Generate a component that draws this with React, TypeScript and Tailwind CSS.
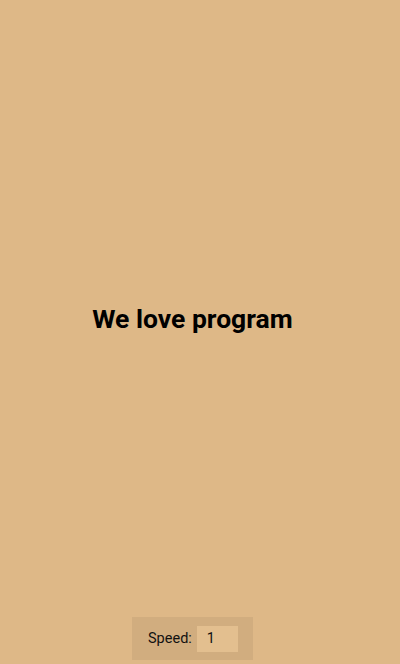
import React from "react";

export default function App() {
  return (
    <div className="w-[400px] h-[664px] bg-[#deb887]">
      <div className="w-[385px] h-[664px] flex flex-col items-center" style={{ fontFamily: "Roboto, 'Liberation Sans', sans-serif" }}>
        <div className="flex-1 flex items-center justify-center pt-[22px]">
          <h1 className="text-[26.5px] font-bold text-black leading-none">We love program</h1>
        </div>
        <div className="mb-[4px] w-[121px] h-[43px] bg-[#d1ad7f] flex items-center pl-[16px] gap-[5px]">
          <span className="text-[14.5px] text-[#111]">Speed:</span>
          <div className="w-[41px] h-[26px] bg-[#e3bf8f] flex items-center pl-[10px] text-[14.5px] text-[#111]">1</div>
        </div>
      </div>
    </div>
  );
}
